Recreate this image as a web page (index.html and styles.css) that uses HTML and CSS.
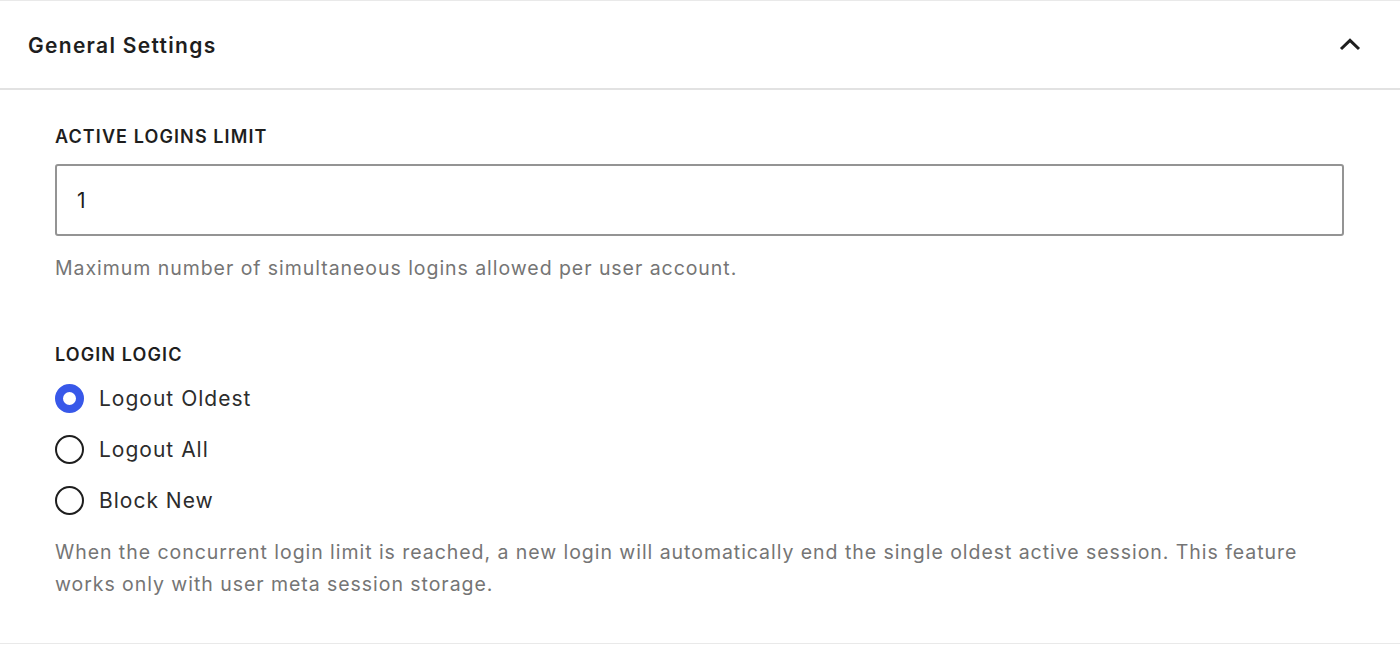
FILE: index.html
```html
<!DOCTYPE html>
<html lang="en">
<head>
<meta charset="utf-8">
<title>General Settings</title>
<link rel="stylesheet" href="styles.css">
</head>
<body>
<section class="panel">
  <header class="panel-header">
    <h2 class="panel-title">General Settings</h2>
    <svg class="chevron" width="24" height="24" viewBox="0 0 24 24" aria-hidden="true">
      <path d="M3 15 L12 6.3 L21 15" fill="none" stroke="#1e1e1e" stroke-width="3"/>
    </svg>
  </header>
  <div class="panel-body">
    <div class="field">
      <label class="field-label" for="limit">Active Logins Limit</label>
      <input id="limit" class="text-input" type="text" value="1">
      <p class="help">Maximum number of simultaneous logins allowed per user account.</p>
    </div>
    <div class="field radio-field" role="radiogroup">
      <div class="field-label">Login Logic</div>
      <label class="radio-row"><span class="radio checked"></span><span class="radio-text">Logout Oldest</span></label>
      <label class="radio-row"><span class="radio"></span><span class="radio-text">Logout All</span></label>
      <label class="radio-row"><span class="radio"></span><span class="radio-text">Block New</span></label>
      <p class="help desc">When the concurrent login limit is reached, a new login will automatically end the single oldest active session. This feature works only with user meta session storage.</p>
    </div>
  </div>
</section>
</body>
</html>
```
FILE: styles.css
```css
html, body {
  margin: 0;
  padding: 0;
  background: #ffffff;
}
body {
  font-family: Inter, "Noto Sans", "Liberation Sans", sans-serif;
  color: #1e1e1e;
  width: 1400px;
  height: 645px;
  overflow: hidden;
}
.panel {
  border-top: 1px solid #e9e9e9;
  border-bottom: 1px solid #e9e9e9;
  height: 644px;
  box-sizing: border-box;
}
.panel-header {
  display: flex;
  align-items: center;
  justify-content: space-between;
  height: 89px;
  box-sizing: border-box;
  padding: 2px 38px 0 28px;
  border-bottom: 2px solid #e2e2e2;
}
.panel-title {
  margin: 0;
  font-size: 21px;
  font-weight: 600;
  color: #1e1e1e;
  letter-spacing: 1.3px;
}
.chevron {
  display: block;
}
.panel-body {
  padding: 35px 56px 0 55px;
}
.field {
  margin: 0;
}
.field-label {
  display: block;
  font-size: 18px;
  font-weight: 600;
  text-transform: uppercase;
  color: #1e1e1e;
  letter-spacing: 1.1px;
  line-height: 24px;
  margin: 0 0 15px;
  padding: 0;
}
.text-input {
  display: block;
  width: 100%;
  height: 72px;
  box-sizing: border-box;
  border: 2px solid #949494;
  border-radius: 3px;
  padding: 0 20px;
  font-family: inherit;
  font-size: 21px;
  color: #1e1e1e;
  outline: none;
  background: #fff;
}
.help {
  margin: 19px 0 0;
  font-size: 19.5px;
  letter-spacing: 0.95px;
  line-height: 26px;
  color: #757575;
}
.radio-field {
  margin-top: 62px;
}
.radio-field .field-label {
  margin-bottom: 6px;
}
.radio-row {
  display: flex;
  align-items: center;
  gap: 15px;
  height: 51px;
  cursor: pointer;
}
.radio {
  width: 29px;
  height: 29px;
  box-sizing: border-box;
  border-radius: 50%;
  border: 2px solid #1e1e1e;
  background: #fff;
  flex: none;
}
.radio.checked {
  border: 8.5px solid #3858e9;
}
.radio-text {
  font-size: 21px;
  letter-spacing: 1px;
  color: #2c2c2c;
}
.desc {
  margin-top: 10px;
  line-height: 32px;
}
```
